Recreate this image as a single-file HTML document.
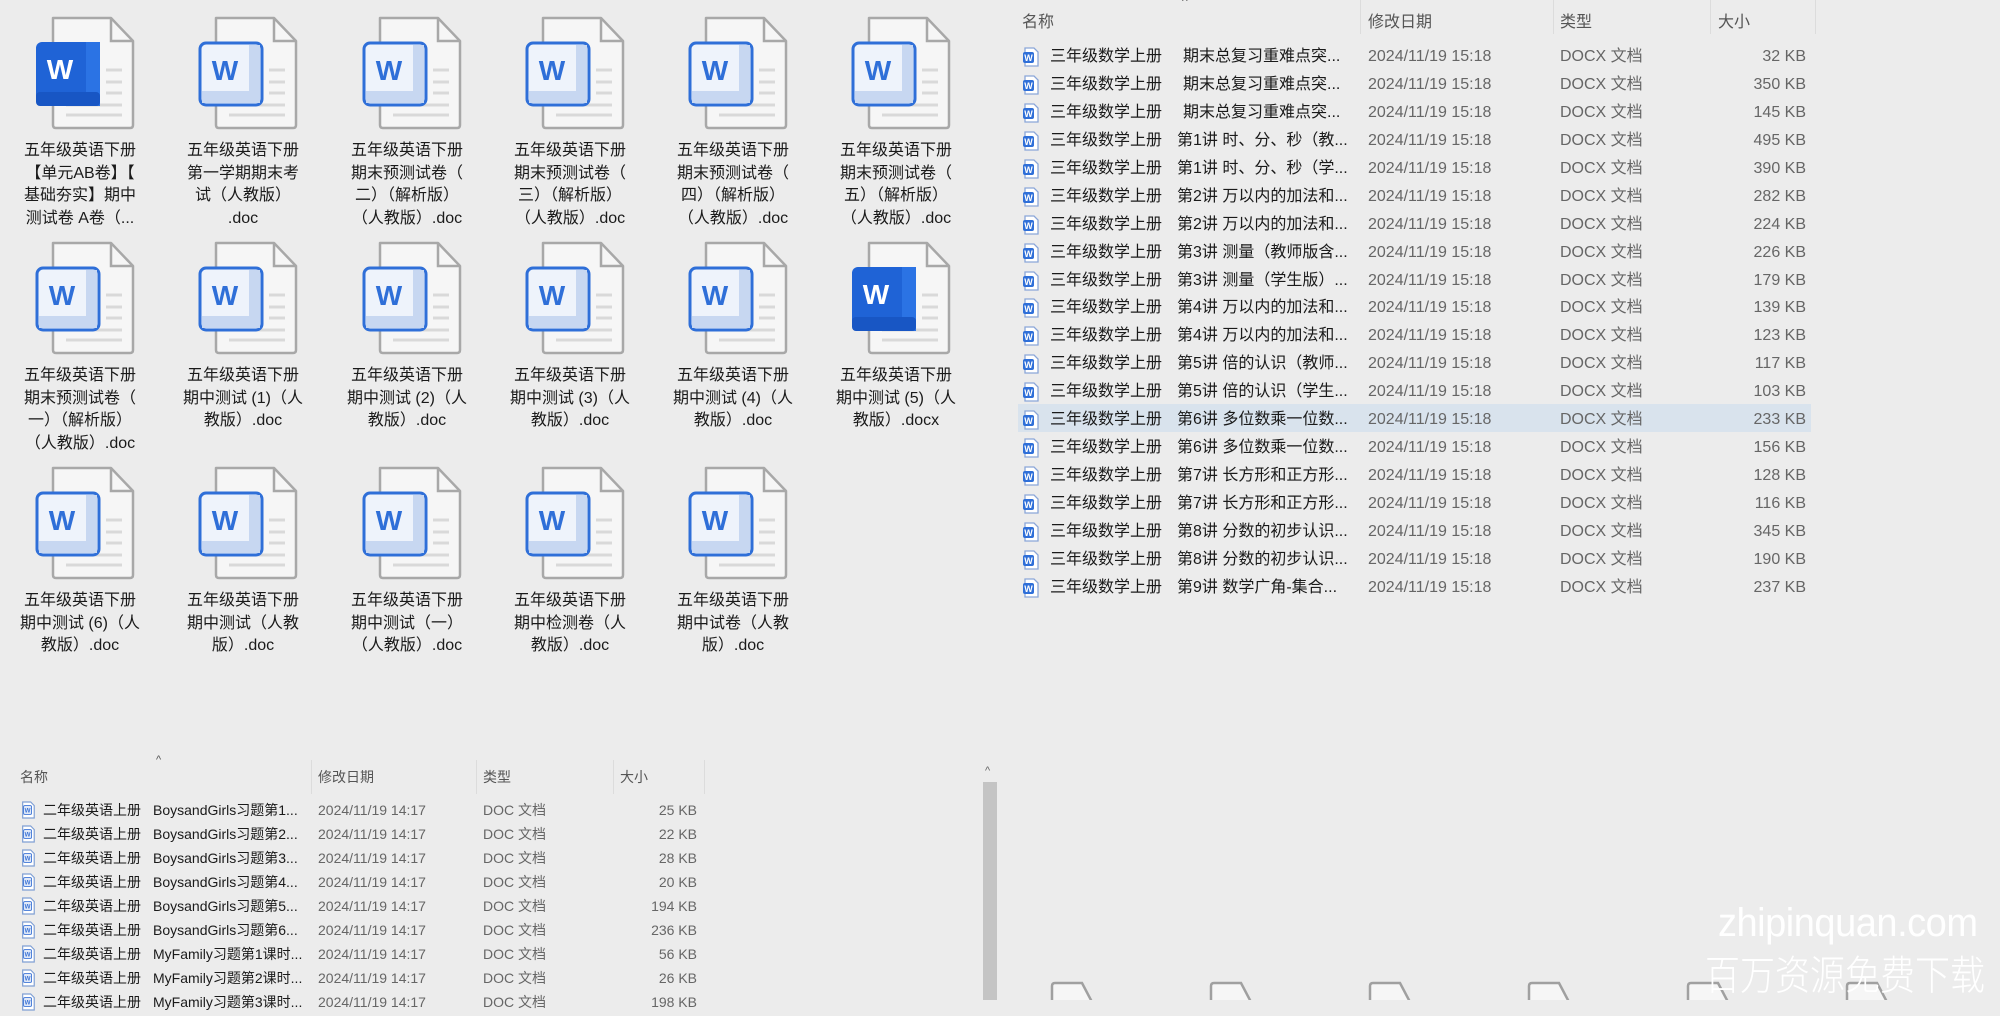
<!DOCTYPE html>
<html><head><meta charset="utf-8"><style>
body{margin:0;width:2000px;height:1000px;background:#ececec;overflow:hidden;position:relative;font-family:"Liberation Sans","Microsoft YaHei","Noto Sans CJK SC",sans-serif;color:#1a1a1a}
.it{position:absolute;width:150px;text-align:center;font-size:16px;line-height:22.5px}
.it svg{display:block;margin:0 auto 8px auto}
.hd{position:absolute;color:#555;font-size:16px}
.r{position:absolute;left:0;width:2000px;height:22px;font-size:16px;white-space:nowrap}
.r span{position:absolute;top:0;line-height:22px}
.g{color:#666}
.sep{position:absolute;width:1px;background:#dcdcdc}
.b{position:absolute;left:0;width:1000px;height:20px;font-size:14px;white-space:nowrap}
.b span{position:absolute;top:0;line-height:20px}
</style></head><body>
<svg width="0" height="0" style="position:absolute">
<defs>
<symbol id="pg" viewBox="0 0 140 120">
<path d="M43 6 H101 L123 29 V113 Q123 116 120 116 H46 Q43 116 43 113 Z" fill="#f6f6f6" stroke="#a8a8a8" stroke-width="2.5" stroke-linejoin="round"/>
<path d="M101 6 V29 H123" fill="none" stroke="#a8a8a8" stroke-width="2.5"/>
<g stroke="#d9d9d9" stroke-width="3"><line x1="96" y1="58" x2="112" y2="58"/><line x1="96" y1="70" x2="112" y2="70"/><line x1="96" y1="81" x2="112" y2="81"/><line x1="56" y1="93" x2="112" y2="93"/><line x1="56" y1="103" x2="112" y2="103"/></g>
</symbol>
<symbol id="wo" viewBox="0 0 140 120">
<use href="#pg"/>
<rect x="27" y="31" width="62" height="62" rx="6" fill="#eef3fb" stroke="#2f6fd8" stroke-width="3"/>
<rect x="76" y="33" width="11" height="58" fill="#c7d7f1"/>
<rect x="29" y="79" width="58" height="12" fill="#c7d7f1"/>
<text x="52" y="68" font-family="Liberation Sans,sans-serif" font-weight="bold" font-size="28" fill="#2f6fd8" text-anchor="middle">W</text>
</symbol>
<symbol id="wf" viewBox="0 0 140 120">
<use href="#pg"/>
<rect x="26" y="30" width="64" height="64" rx="6" fill="#1f63d6"/>
<rect x="76" y="30" width="14" height="64" fill="#2b73e4"/>
<rect x="26" y="80" width="64" height="14" rx="4" fill="#1856c4"/>
<text x="50" y="67" font-family="Liberation Sans,sans-serif" font-weight="bold" font-size="28" fill="#fff" text-anchor="middle">W</text>
</symbol>
<symbol id="sm" viewBox="0 0 18 20"><path d="M3 1 H12 L16 5 V19 H3 Z" fill="#fff" stroke="#8aa6d8" stroke-width="1.3"/><rect x="1" y="5" width="11" height="11" rx="2" fill="#2f6fd8"/><text x="6.5" y="14" font-size="9" font-weight="bold" fill="#fff" text-anchor="middle" font-family="Liberation Sans,sans-serif">W</text></symbol>
<symbol id="sm2" viewBox="0 0 18 20"><path d="M3 1 H12 L16 5 V19 H3 Z" fill="#fff" stroke="#7f9fd4" stroke-width="1.3"/><rect x="4" y="5" width="9" height="10" rx="1.5" fill="#dfe8f8" stroke="#3f76d6" stroke-width="1"/><text x="8.5" y="13" font-size="7" font-weight="bold" fill="#3f76d6" text-anchor="middle" font-family="Liberation Sans,sans-serif">W</text></symbol>
</defs></svg>

<div class="it" style="left:5px;top:12px"><svg width="140" height="120"><use href="#wf"/></svg>五年级英语下册<br>【单元AB卷】【<br>基础夯实】期中<br>测试卷 A卷（...</div>
<div class="it" style="left:168px;top:12px"><svg width="140" height="120"><use href="#wo"/></svg>五年级英语下册<br>第一学期期末考<br>试（人教版）<br>.doc</div>
<div class="it" style="left:332px;top:12px"><svg width="140" height="120"><use href="#wo"/></svg>五年级英语下册<br>期末预测试卷（<br>二）（解析版）<br>（人教版）.doc</div>
<div class="it" style="left:495px;top:12px"><svg width="140" height="120"><use href="#wo"/></svg>五年级英语下册<br>期末预测试卷（<br>三）（解析版）<br>（人教版）.doc</div>
<div class="it" style="left:658px;top:12px"><svg width="140" height="120"><use href="#wo"/></svg>五年级英语下册<br>期末预测试卷（<br>四）（解析版）<br>（人教版）.doc</div>
<div class="it" style="left:821px;top:12px"><svg width="140" height="120"><use href="#wo"/></svg>五年级英语下册<br>期末预测试卷（<br>五）（解析版）<br>（人教版）.doc</div>

<div class="it" style="left:5px;top:237px"><svg width="140" height="120"><use href="#wo"/></svg>五年级英语下册<br>期末预测试卷（<br>一）（解析版）<br>（人教版）.doc</div>
<div class="it" style="left:168px;top:237px"><svg width="140" height="120"><use href="#wo"/></svg>五年级英语下册<br>期中测试 (1)（人<br>教版）.doc</div>
<div class="it" style="left:332px;top:237px"><svg width="140" height="120"><use href="#wo"/></svg>五年级英语下册<br>期中测试 (2)（人<br>教版）.doc</div>
<div class="it" style="left:495px;top:237px"><svg width="140" height="120"><use href="#wo"/></svg>五年级英语下册<br>期中测试 (3)（人<br>教版）.doc</div>
<div class="it" style="left:658px;top:237px"><svg width="140" height="120"><use href="#wo"/></svg>五年级英语下册<br>期中测试 (4)（人<br>教版）.doc</div>
<div class="it" style="left:821px;top:237px"><svg width="140" height="120"><use href="#wf"/></svg>五年级英语下册<br>期中测试 (5)（人<br>教版）.docx</div>

<div class="it" style="left:5px;top:462px"><svg width="140" height="120"><use href="#wo"/></svg>五年级英语下册<br>期中测试 (6)（人<br>教版）.doc</div>
<div class="it" style="left:168px;top:462px"><svg width="140" height="120"><use href="#wo"/></svg>五年级英语下册<br>期中测试（人教<br>版）.doc</div>
<div class="it" style="left:332px;top:462px"><svg width="140" height="120"><use href="#wo"/></svg>五年级英语下册<br>期中测试（一）<br>（人教版）.doc</div>
<div class="it" style="left:495px;top:462px"><svg width="140" height="120"><use href="#wo"/></svg>五年级英语下册<br>期中检测卷（人<br>教版）.doc</div>
<div class="it" style="left:658px;top:462px"><svg width="140" height="120"><use href="#wo"/></svg>五年级英语下册<br>期中试卷（人教<br>版）.doc</div>

<div class="hd" style="left:1022px;top:8px">名称</div>
<div class="hd" style="left:1182px;top:-6px;font-size:12px">^</div>
<div class="hd" style="left:1368px;top:8px">修改日期</div>
<div class="hd" style="left:1560px;top:8px">类型</div>
<div class="hd" style="left:1718px;top:8px">大小</div>
<div class="sep" style="left:1360px;top:0;height:34px"></div>
<div class="sep" style="left:1553px;top:0;height:34px"></div>
<div class="sep" style="left:1710px;top:0;height:34px"></div>
<div class="sep" style="left:1815px;top:0;height:34px"></div>
<div style="position:absolute;left:1018px;top:404px;width:793px;height:28px;background:#d9e3ed"></div>

<div class="r" style="top:46px"><span style="left:1022px;top:1px"><svg width="18" height="20"><use href="#sm"/></svg></span><span style="left:1050px">三年级数学上册</span><span style="left:1183px">期末总复习重难点突...</span><span class="g" style="left:1368px">2024/11/19 15:18</span><span class="g" style="left:1560px">DOCX 文档</span><span class="g" style="right:194px">32 KB</span></div>
<div class="r" style="top:74px"><span style="left:1022px;top:1px"><svg width="18" height="20"><use href="#sm"/></svg></span><span style="left:1050px">三年级数学上册</span><span style="left:1183px">期末总复习重难点突...</span><span class="g" style="left:1368px">2024/11/19 15:18</span><span class="g" style="left:1560px">DOCX 文档</span><span class="g" style="right:194px">350 KB</span></div>
<div class="r" style="top:102px"><span style="left:1022px;top:1px"><svg width="18" height="20"><use href="#sm"/></svg></span><span style="left:1050px">三年级数学上册</span><span style="left:1183px">期末总复习重难点突...</span><span class="g" style="left:1368px">2024/11/19 15:18</span><span class="g" style="left:1560px">DOCX 文档</span><span class="g" style="right:194px">145 KB</span></div>
<div class="r" style="top:130px"><span style="left:1022px;top:1px"><svg width="18" height="20"><use href="#sm"/></svg></span><span style="left:1050px">三年级数学上册</span><span style="left:1177px">第1讲 时、分、秒（教...</span><span class="g" style="left:1368px">2024/11/19 15:18</span><span class="g" style="left:1560px">DOCX 文档</span><span class="g" style="right:194px">495 KB</span></div>
<div class="r" style="top:158px"><span style="left:1022px;top:1px"><svg width="18" height="20"><use href="#sm"/></svg></span><span style="left:1050px">三年级数学上册</span><span style="left:1177px">第1讲 时、分、秒（学...</span><span class="g" style="left:1368px">2024/11/19 15:18</span><span class="g" style="left:1560px">DOCX 文档</span><span class="g" style="right:194px">390 KB</span></div>
<div class="r" style="top:186px"><span style="left:1022px;top:1px"><svg width="18" height="20"><use href="#sm"/></svg></span><span style="left:1050px">三年级数学上册</span><span style="left:1177px">第2讲 万以内的加法和...</span><span class="g" style="left:1368px">2024/11/19 15:18</span><span class="g" style="left:1560px">DOCX 文档</span><span class="g" style="right:194px">282 KB</span></div>
<div class="r" style="top:214px"><span style="left:1022px;top:1px"><svg width="18" height="20"><use href="#sm"/></svg></span><span style="left:1050px">三年级数学上册</span><span style="left:1177px">第2讲 万以内的加法和...</span><span class="g" style="left:1368px">2024/11/19 15:18</span><span class="g" style="left:1560px">DOCX 文档</span><span class="g" style="right:194px">224 KB</span></div>
<div class="r" style="top:242px"><span style="left:1022px;top:1px"><svg width="18" height="20"><use href="#sm"/></svg></span><span style="left:1050px">三年级数学上册</span><span style="left:1177px">第3讲 测量（教师版含...</span><span class="g" style="left:1368px">2024/11/19 15:18</span><span class="g" style="left:1560px">DOCX 文档</span><span class="g" style="right:194px">226 KB</span></div>
<div class="r" style="top:270px"><span style="left:1022px;top:1px"><svg width="18" height="20"><use href="#sm"/></svg></span><span style="left:1050px">三年级数学上册</span><span style="left:1177px">第3讲 测量（学生版）...</span><span class="g" style="left:1368px">2024/11/19 15:18</span><span class="g" style="left:1560px">DOCX 文档</span><span class="g" style="right:194px">179 KB</span></div>
<div class="r" style="top:297px"><span style="left:1022px;top:1px"><svg width="18" height="20"><use href="#sm"/></svg></span><span style="left:1050px">三年级数学上册</span><span style="left:1177px">第4讲 万以内的加法和...</span><span class="g" style="left:1368px">2024/11/19 15:18</span><span class="g" style="left:1560px">DOCX 文档</span><span class="g" style="right:194px">139 KB</span></div>
<div class="r" style="top:325px"><span style="left:1022px;top:1px"><svg width="18" height="20"><use href="#sm"/></svg></span><span style="left:1050px">三年级数学上册</span><span style="left:1177px">第4讲 万以内的加法和...</span><span class="g" style="left:1368px">2024/11/19 15:18</span><span class="g" style="left:1560px">DOCX 文档</span><span class="g" style="right:194px">123 KB</span></div>
<div class="r" style="top:353px"><span style="left:1022px;top:1px"><svg width="18" height="20"><use href="#sm"/></svg></span><span style="left:1050px">三年级数学上册</span><span style="left:1177px">第5讲 倍的认识（教师...</span><span class="g" style="left:1368px">2024/11/19 15:18</span><span class="g" style="left:1560px">DOCX 文档</span><span class="g" style="right:194px">117 KB</span></div>
<div class="r" style="top:381px"><span style="left:1022px;top:1px"><svg width="18" height="20"><use href="#sm"/></svg></span><span style="left:1050px">三年级数学上册</span><span style="left:1177px">第5讲 倍的认识（学生...</span><span class="g" style="left:1368px">2024/11/19 15:18</span><span class="g" style="left:1560px">DOCX 文档</span><span class="g" style="right:194px">103 KB</span></div>
<div class="r" style="top:409px"><span style="left:1022px;top:1px"><svg width="18" height="20"><use href="#sm"/></svg></span><span style="left:1050px">三年级数学上册</span><span style="left:1177px">第6讲 多位数乘一位数...</span><span class="g" style="left:1368px">2024/11/19 15:18</span><span class="g" style="left:1560px">DOCX 文档</span><span class="g" style="right:194px">233 KB</span></div>
<div class="r" style="top:437px"><span style="left:1022px;top:1px"><svg width="18" height="20"><use href="#sm"/></svg></span><span style="left:1050px">三年级数学上册</span><span style="left:1177px">第6讲 多位数乘一位数...</span><span class="g" style="left:1368px">2024/11/19 15:18</span><span class="g" style="left:1560px">DOCX 文档</span><span class="g" style="right:194px">156 KB</span></div>
<div class="r" style="top:465px"><span style="left:1022px;top:1px"><svg width="18" height="20"><use href="#sm"/></svg></span><span style="left:1050px">三年级数学上册</span><span style="left:1177px">第7讲 长方形和正方形...</span><span class="g" style="left:1368px">2024/11/19 15:18</span><span class="g" style="left:1560px">DOCX 文档</span><span class="g" style="right:194px">128 KB</span></div>
<div class="r" style="top:493px"><span style="left:1022px;top:1px"><svg width="18" height="20"><use href="#sm"/></svg></span><span style="left:1050px">三年级数学上册</span><span style="left:1177px">第7讲 长方形和正方形...</span><span class="g" style="left:1368px">2024/11/19 15:18</span><span class="g" style="left:1560px">DOCX 文档</span><span class="g" style="right:194px">116 KB</span></div>
<div class="r" style="top:521px"><span style="left:1022px;top:1px"><svg width="18" height="20"><use href="#sm"/></svg></span><span style="left:1050px">三年级数学上册</span><span style="left:1177px">第8讲 分数的初步认识...</span><span class="g" style="left:1368px">2024/11/19 15:18</span><span class="g" style="left:1560px">DOCX 文档</span><span class="g" style="right:194px">345 KB</span></div>
<div class="r" style="top:549px"><span style="left:1022px;top:1px"><svg width="18" height="20"><use href="#sm"/></svg></span><span style="left:1050px">三年级数学上册</span><span style="left:1177px">第8讲 分数的初步认识...</span><span class="g" style="left:1368px">2024/11/19 15:18</span><span class="g" style="left:1560px">DOCX 文档</span><span class="g" style="right:194px">190 KB</span></div>
<div class="r" style="top:577px"><span style="left:1022px;top:1px"><svg width="18" height="20"><use href="#sm"/></svg></span><span style="left:1050px">三年级数学上册</span><span style="left:1177px">第9讲 数学广角-集合...</span><span class="g" style="left:1368px">2024/11/19 15:18</span><span class="g" style="left:1560px">DOCX 文档</span><span class="g" style="right:194px">237 KB</span></div>

<div class="hd" style="left:20px;top:767px;font-size:14px">名称</div>
<div class="hd" style="left:156px;top:754px;font-size:11px">^</div>
<div class="hd" style="left:318px;top:767px;font-size:14px">修改日期</div>
<div class="hd" style="left:483px;top:767px;font-size:14px">类型</div>
<div class="hd" style="left:620px;top:767px;font-size:14px">大小</div>
<div class="sep" style="left:311px;top:760px;height:34px"></div>
<div class="sep" style="left:476px;top:760px;height:34px"></div>
<div class="sep" style="left:613px;top:760px;height:34px"></div>
<div class="sep" style="left:704px;top:760px;height:34px"></div>
<div style="position:absolute;left:985px;top:765px;font-size:11px;color:#666">^</div>
<div style="position:absolute;left:983px;top:782px;width:14px;height:218px;background:#c4c4c4"></div>

<div class="b" style="top:800px"><span style="left:20px;top:1px"><svg width="16" height="18"><use href="#sm2"/></svg></span><span style="left:43px">二年级英语上册</span><span style="left:153px">BoysandGirls习题第1...</span><span class="g" style="left:318px">2024/11/19 14:17</span><span class="g" style="left:483px">DOC 文档</span><span class="g" style="right:303px">25 KB</span></div>
<div class="b" style="top:824px"><span style="left:20px;top:1px"><svg width="16" height="18"><use href="#sm2"/></svg></span><span style="left:43px">二年级英语上册</span><span style="left:153px">BoysandGirls习题第2...</span><span class="g" style="left:318px">2024/11/19 14:17</span><span class="g" style="left:483px">DOC 文档</span><span class="g" style="right:303px">22 KB</span></div>
<div class="b" style="top:848px"><span style="left:20px;top:1px"><svg width="16" height="18"><use href="#sm2"/></svg></span><span style="left:43px">二年级英语上册</span><span style="left:153px">BoysandGirls习题第3...</span><span class="g" style="left:318px">2024/11/19 14:17</span><span class="g" style="left:483px">DOC 文档</span><span class="g" style="right:303px">28 KB</span></div>
<div class="b" style="top:872px"><span style="left:20px;top:1px"><svg width="16" height="18"><use href="#sm2"/></svg></span><span style="left:43px">二年级英语上册</span><span style="left:153px">BoysandGirls习题第4...</span><span class="g" style="left:318px">2024/11/19 14:17</span><span class="g" style="left:483px">DOC 文档</span><span class="g" style="right:303px">20 KB</span></div>
<div class="b" style="top:896px"><span style="left:20px;top:1px"><svg width="16" height="18"><use href="#sm2"/></svg></span><span style="left:43px">二年级英语上册</span><span style="left:153px">BoysandGirls习题第5...</span><span class="g" style="left:318px">2024/11/19 14:17</span><span class="g" style="left:483px">DOC 文档</span><span class="g" style="right:303px">194 KB</span></div>
<div class="b" style="top:920px"><span style="left:20px;top:1px"><svg width="16" height="18"><use href="#sm2"/></svg></span><span style="left:43px">二年级英语上册</span><span style="left:153px">BoysandGirls习题第6...</span><span class="g" style="left:318px">2024/11/19 14:17</span><span class="g" style="left:483px">DOC 文档</span><span class="g" style="right:303px">236 KB</span></div>
<div class="b" style="top:944px"><span style="left:20px;top:1px"><svg width="16" height="18"><use href="#sm2"/></svg></span><span style="left:43px">二年级英语上册</span><span style="left:153px">MyFamily习题第1课时...</span><span class="g" style="left:318px">2024/11/19 14:17</span><span class="g" style="left:483px">DOC 文档</span><span class="g" style="right:303px">56 KB</span></div>
<div class="b" style="top:968px"><span style="left:20px;top:1px"><svg width="16" height="18"><use href="#sm2"/></svg></span><span style="left:43px">二年级英语上册</span><span style="left:153px">MyFamily习题第2课时...</span><span class="g" style="left:318px">2024/11/19 14:17</span><span class="g" style="left:483px">DOC 文档</span><span class="g" style="right:303px">26 KB</span></div>
<div class="b" style="top:992px"><span style="left:20px;top:1px"><svg width="16" height="18"><use href="#sm2"/></svg></span><span style="left:43px">二年级英语上册</span><span style="left:153px">MyFamily习题第3课时...</span><span class="g" style="left:318px">2024/11/19 14:17</span><span class="g" style="left:483px">DOC 文档</span><span class="g" style="right:303px">198 KB</span></div>

<svg style="position:absolute;left:1050px;top:980px" width="900" height="20">
<g fill="#f6f6f6" stroke="#a0a0a0" stroke-width="2.5">
<path d="M2 22 V6 Q2 3 5 3 H32 L42 22"/><path d="M161 22 V6 Q161 3 164 3 H191 L201 22"/><path d="M320 22 V6 Q320 3 323 3 H350 L360 22"/><path d="M479 22 V6 Q479 3 482 3 H509 L519 22"/><path d="M638 22 V6 Q638 3 641 3 H668 L678 22"/><path d="M797 22 V6 Q797 3 800 3 H827 L837 22"/>
</g></svg>

<div style="position:absolute;left:1718px;top:900px;font-size:40px;color:#fff;line-height:46px;white-space:nowrap;font-family:'Liberation Sans',sans-serif;letter-spacing:-0.5px;transform:scaleX(0.95);transform-origin:left top">zhipinquan.com</div>
<div style="position:absolute;left:1705px;top:948px;font-size:35px;color:#fff;line-height:44px;white-space:nowrap;font-family:'Noto Sans CJK SC',sans-serif;font-weight:300;transform:scaleY(1.15);transform-origin:left top">百万资源免费下载</div>
</body></html>
